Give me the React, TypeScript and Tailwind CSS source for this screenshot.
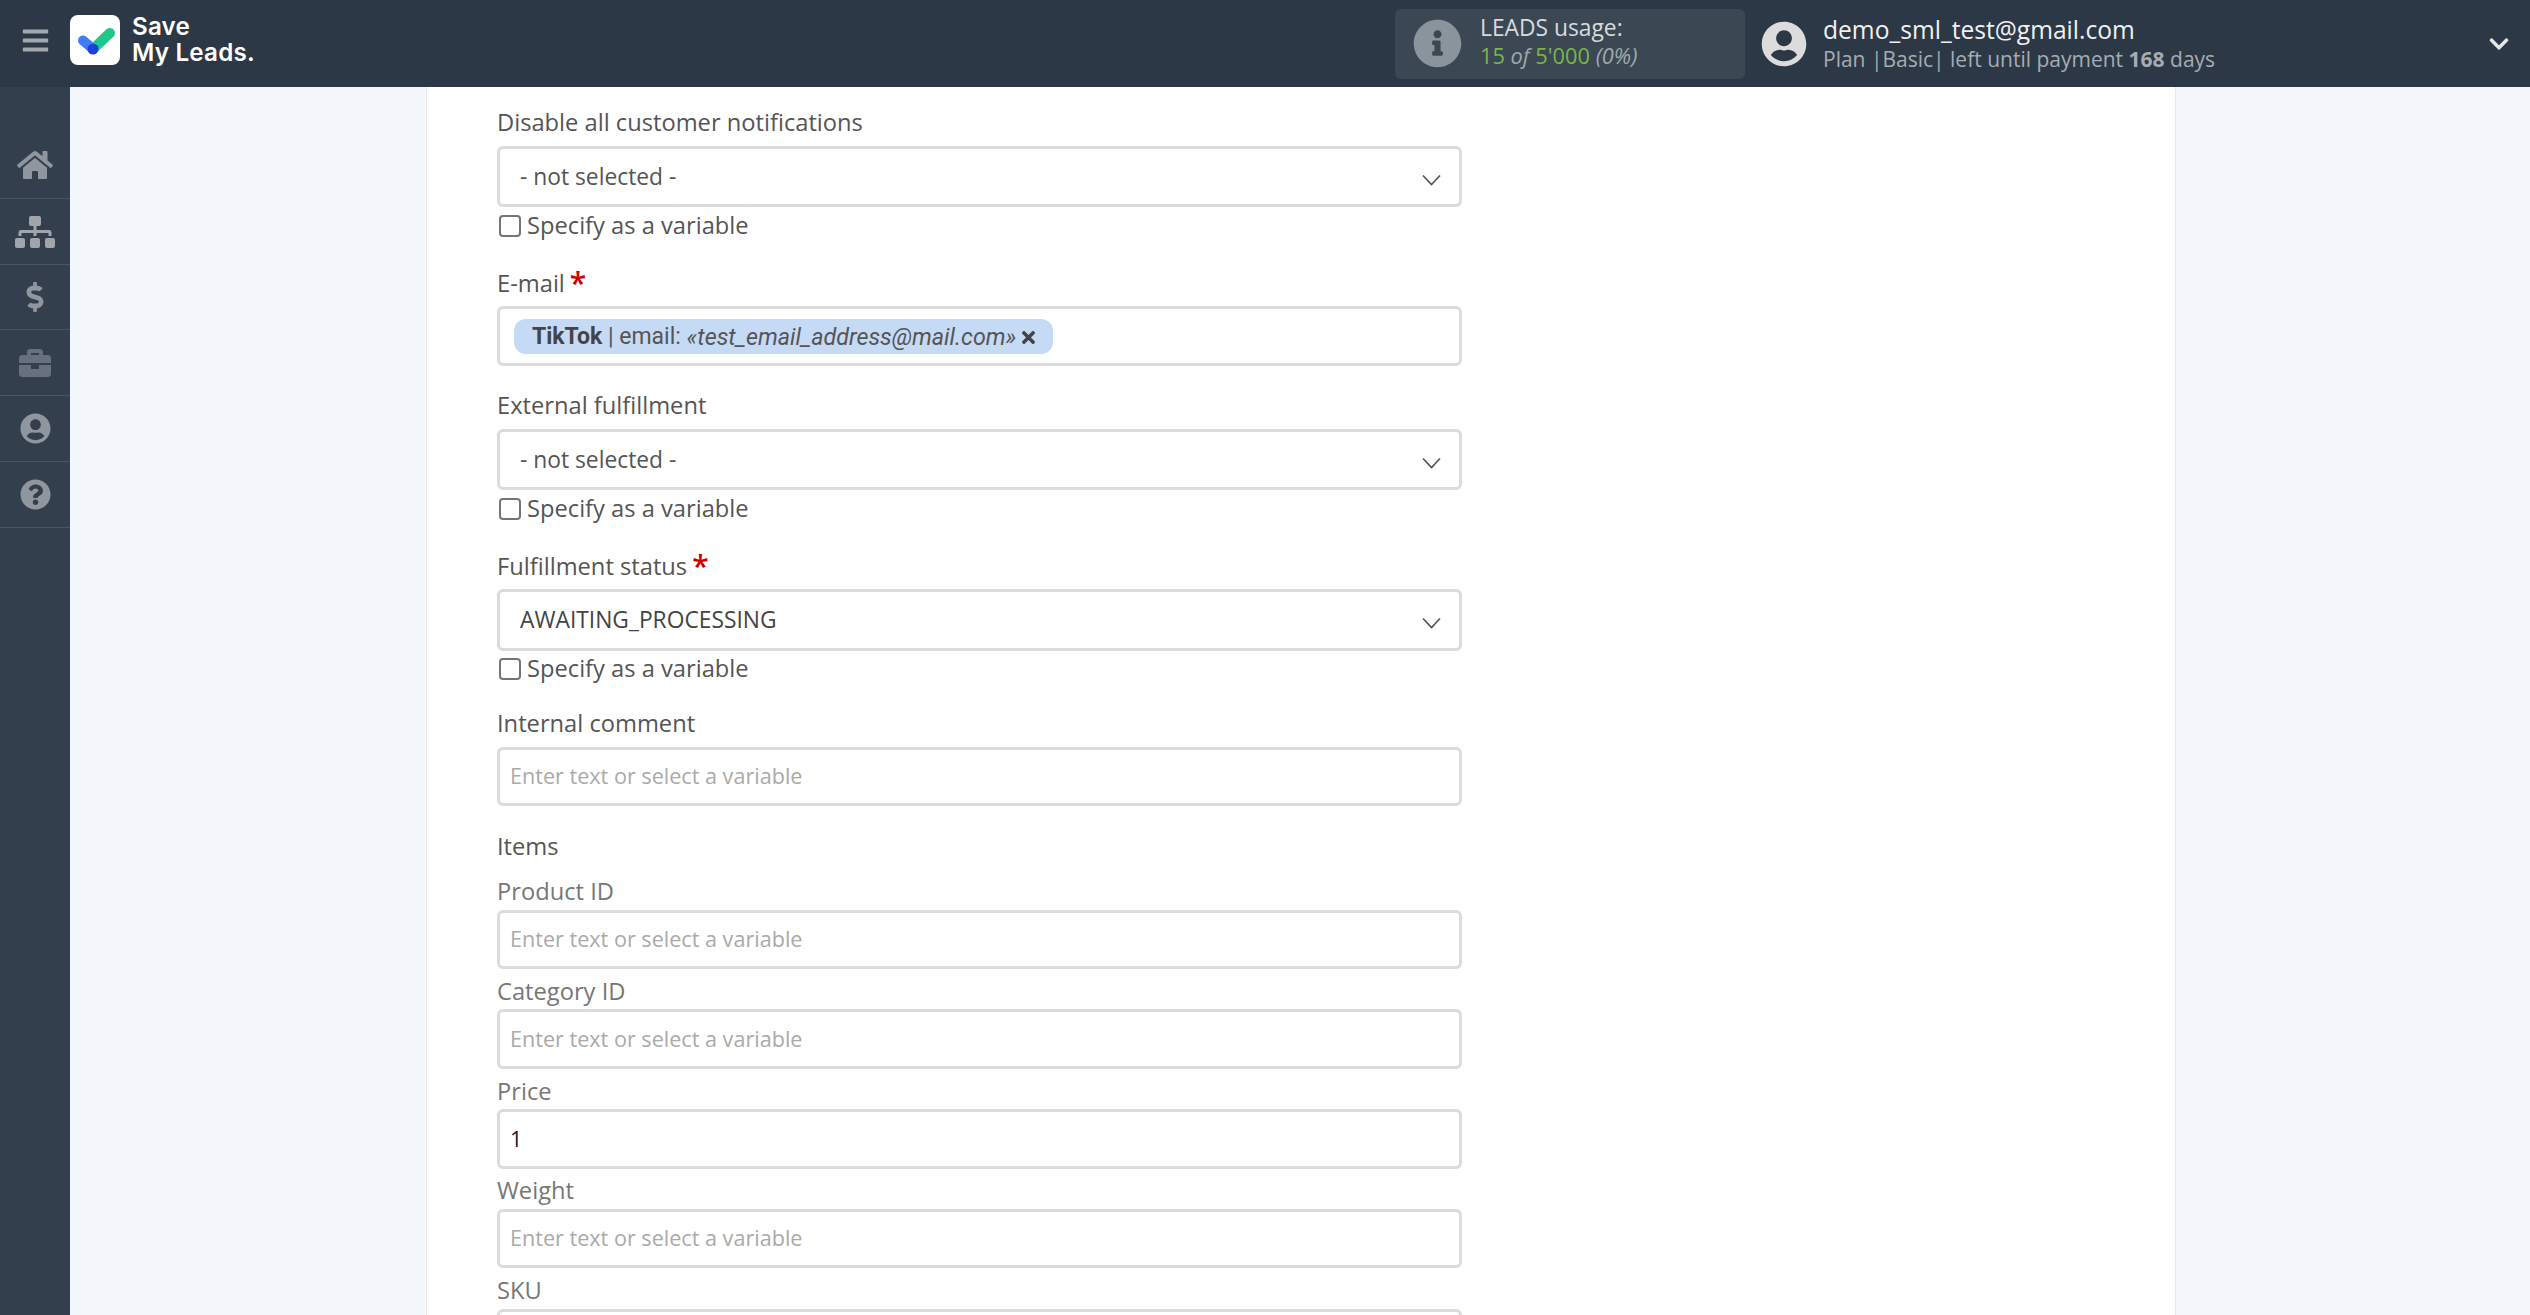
import React from "react";
import { FaHome, FaSitemap, FaDollarSign, FaBriefcase, FaUserCircle, FaQuestionCircle, FaInfoCircle, FaBars, FaChevronDown, FaTimes } from "react-icons/fa";

const sideItems = [
  { icon: FaHome, cls: "text-[36px] text-[#8f969e]" },
  { icon: FaSitemap, cls: "text-[40px] text-[#a0a5ac] translate-y-[1px]" },
  { icon: FaDollarSign, cls: "text-[30px] text-[#8f969e]" },
  { icon: FaBriefcase, cls: "text-[32px] text-[#667080]" },
  { icon: FaUserCircle, cls: "text-[31px] text-[#8f969e]" },
  { icon: FaQuestionCircle, cls: "text-[31px] text-[#8f969e]" },
];

function Chevron() {
  return (
    <svg width="19" height="12" viewBox="0 0 19 12" className="shrink-0 translate-y-[3px]" fill="none">
      <polyline points="1,1.5 9.5,10.5 18,1.5" stroke="#555" strokeWidth="1.7" />
    </svg>
  );
}

function Label({ children, required, muted, className }: { children: React.ReactNode; required?: boolean; muted?: boolean; className: string }) {
  return (
    <div className={`h-[32px] leading-[32px] text-[23.7px] ${muted ? "text-[#777]" : "text-[#555]"} ${className}`}>
      {children}
      {required && <span className="ml-[5px] text-[#cc0000] text-[30px] leading-[20px] font-semibold relative top-[2px]">*</span>}
    </div>
  );
}

function Select({ value, dark, className }: { value: string; dark?: boolean; className: string }) {
  return (
    <div className={`flex items-center justify-between border-[3px] border-[#dcdcdc] rounded-[6px] pl-[20px] pr-[18px] bg-white ${className}`}>
      <span className={`text-[22.8px] ${dark ? "text-[#444]" : "text-[#555] pt-[2px]"}`}>{value}</span>
      <Chevron />
    </div>
  );
}

function Specify({ className }: { className: string }) {
  return (
    <label className={`flex items-center h-[24px] pl-[2px] gap-[6px] text-[23.7px] text-[#555] ${className}`}>
      <input type="checkbox" className="appearance-none w-[22px] h-[22px] rounded-[4px] border-2 border-[#767676] bg-white shrink-0" />
      <span>Specify as a variable</span>
    </label>
  );
}

function TextInput({ value, className }: { value?: string; className: string }) {
  return (
    <input
      readOnly
      defaultValue={value}
      placeholder="Enter text or select a variable"
      className={`block w-full border-[3px] border-[#dcdcdc] rounded-[6px] px-[10px] pb-[2px] bg-white text-[21.6px] text-[#222] placeholder:text-[#aaaaaa] outline-none ${className}`}
    />
  );
}

export default function App() {
  return (
    <div className="h-[1315px] w-[2530px] overflow-hidden flex flex-col font-['Open_Sans',sans-serif] bg-[#f4f7fc]">
      <header className="h-[87px] shrink-0 bg-[#2c3845] flex items-center">
        <div className="w-[70px] flex justify-center shrink-0 mb-[6px]">
          <FaBars className="text-[29px] text-[#a3a8ae]" />
        </div>
        <div className="w-[50px] h-[50px] bg-white rounded-[8px] shrink-0 mb-[7px]">
          <svg width="50" height="50" viewBox="0 0 50 50" fill="none" strokeLinecap="round">
            <line x1="13" y1="25.5" x2="23" y2="34" stroke="#3f7cf8" strokeWidth="10" />
            <line x1="23" y1="34" x2="40" y2="18" stroke="#20c78b" strokeWidth="10" />
            <circle cx="23" cy="34" r="5.5" fill="#1b3fd8" />
          </svg>
        </div>
        <div className="ml-[12px] mb-[8px] font-['Inter',sans-serif] font-semibold text-[24.2px] leading-[26px] text-white tracking-[0.2px]">
          <div>Save</div>
          <div>My Leads.</div>
        </div>
        <div className="ml-auto w-[350px] h-[70px] bg-[#3b4853] rounded-[6px] flex items-center pl-[18px] gap-[18px] shrink-0">
          <FaInfoCircle className="text-[49px] text-[#8a949c]" />
          <div className="leading-[28px] mb-[4px]">
            <div className="text-[22.8px] text-[#d8dadc]">LEADS usage:</div>
            <div className="text-[21.8px] text-[#a0a8ae] italic"><span className="text-[#7ab648] not-italic">15</span> of <span className="text-[#7ab648] not-italic">5'000</span> (0%)</div>
          </div>
        </div>
        <div className="ml-[16px] w-[769px] shrink-0 flex items-center pr-[20px]">
          <FaUserCircle className="text-[46px] text-[#dcdcdc] shrink-0" />
          <div className="ml-[16px]">
            <div className="text-[24.6px] leading-[30px] text-[#f0f0f0]">demo_sml_test@gmail.com</div>
            <div className="text-[21px] leading-[28px] text-[#a5acb3]">Plan |Basic| left until payment <b className="font-bold">168</b> days</div>
          </div>
          <FaChevronDown className="ml-auto text-[22px] text-[#e6e6e6]" />
        </div>
      </header>
      <div className="flex flex-1 min-h-0">
        <nav className="w-[70px] shrink-0 bg-[#343f4e] pt-[46px]">
          {sideItems.map((it, i) => {
            const Icon = it.icon;
            return (
              <div key={i} className="h-[65.8px] flex items-center justify-center border-b border-[#4a5563]">
                <Icon className={it.cls} />
              </div>
            );
          })}
        </nav>
        <main className="ml-[356px] w-[1750px] bg-white border-x border-[#e8e8e8] pl-[70px] overflow-hidden">
          <div className="w-[965px] pt-[19px]">
            <Label className="mb-[8px]">Disable all customer notifications</Label>
            <Select value="- not selected -" className="h-[61px]" />
            <Specify className="mt-[7px]" />
            <Label required className="mt-[29px] mb-[7px]">E-mail</Label>
            <div className="h-[60px] border-[3px] border-[#dcdcdc] rounded-[6px] bg-white flex items-center pl-[14px]">
              <span className="h-[35px] pt-[2px] w-[539px] rounded-[12px] bg-[#c5daf5] flex items-center pl-[18px] font-['Roboto',sans-serif] text-[23px] text-[#555] whitespace-nowrap">
                <b className="font-bold text-[#444]">TikTok</b>&nbsp;|&nbsp;email:&nbsp;<i className="text-[23.3px]">«test_email_address@mail.com»</i>
                <FaTimes className="ml-[3px] text-[19px] text-[#444]" />
              </span>
            </div>
            <Label className="mt-[23px] mb-[8px]">External fulfillment</Label>
            <Select value="- not selected -" className="h-[61px]" />
            <Specify className="mt-[7px]" />
            <Label required className="mt-[29px] mb-[7px]">Fulfillment status</Label>
            <Select value="AWAITING_PROCESSING" dark className="h-[62px]" />
            <Specify className="mt-[6px]" />
            <Label className="mt-[26px] mb-[8px]">Internal comment</Label>
            <TextInput className="h-[59px]" />
            <Label className="mt-[24px] mb-[1px]">Items</Label>
            <Label muted className="mt-[13px] mb-[3px]">Product ID</Label>
            <TextInput className="h-[59px]" />
            <Label muted className="mt-[6px] mb-[2px]">Category ID</Label>
            <TextInput className="h-[60px]" />
            <Label muted className="mt-[6px] mb-[2px]">Price</Label>
            <TextInput value="1" className="h-[60px]" />
            <Label muted className="mt-[5px] mb-[3px]">Weight</Label>
            <TextInput className="h-[59px]" />
            <Label muted className="mt-[6px] mb-[3px]">SKU</Label>
            <TextInput className="h-[60px]" />
          </div>
        </main>
      </div>
    </div>
  );
}
